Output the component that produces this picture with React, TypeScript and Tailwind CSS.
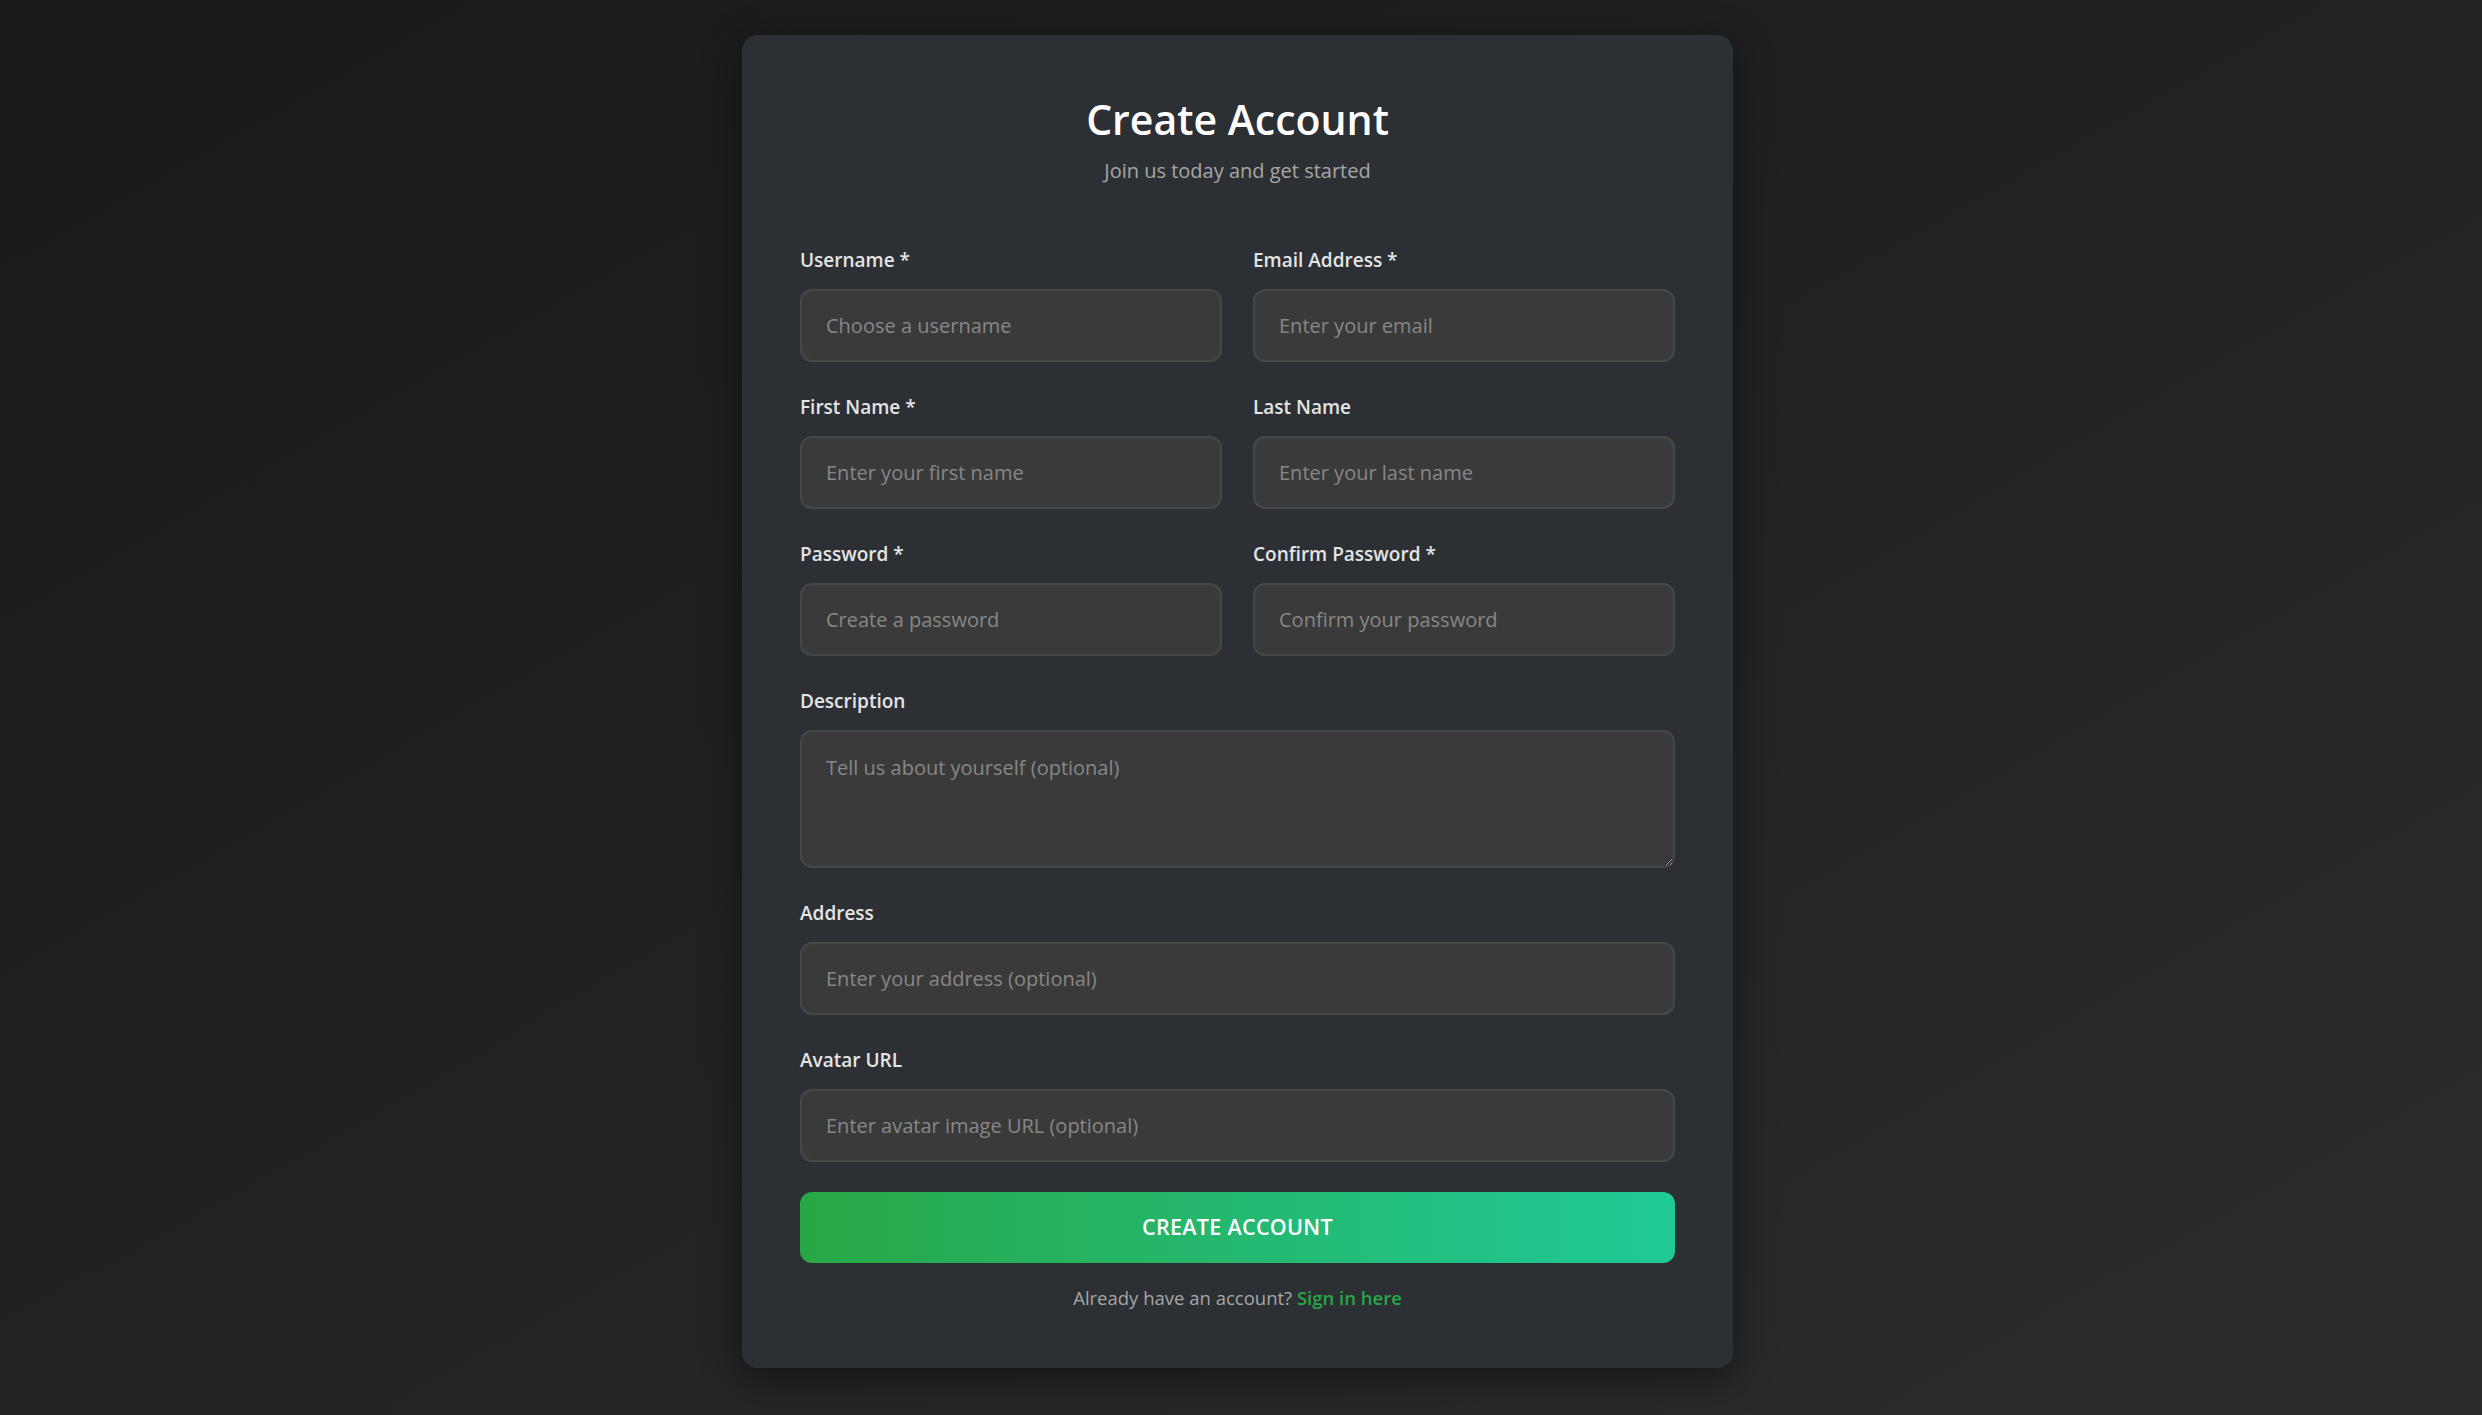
import React from "react";

const inputCls =
  "block w-full h-[73px] rounded-[12px] border-2 border-[#474747] bg-[#3a3a3a] px-[24px] text-[20px] text-[#e0e0e0] placeholder:text-[#878787] outline-none font-['Open_Sans',sans-serif]";

function Field({
  label,
  placeholder,
  type = "text",
}: {
  label: string;
  placeholder: string;
  type?: string;
}) {
  return (
    <div className="mb-[30px]">
      <label className="block mb-[14px] text-[19px] leading-[30px] font-semibold text-[#e4e4e4]">
        {label}
      </label>
      <input type={type} placeholder={placeholder} className={inputCls} />
    </div>
  );
}

export default function App() {
  return (
    <div className="min-h-screen w-full bg-gradient-to-br from-[#1a1a1a] via-[#222222] to-[#2c2c2c] flex justify-center pt-[35px] pr-[7px] pb-[47px] font-['Open_Sans',sans-serif]">
      <div className="w-[991px] rounded-[16px] bg-[#2c3035] shadow-[0_10px_40px_rgba(0,0,0,0.45)] px-[58px] pt-[59px] pb-[51px]">
        <h1 className="text-center text-[41px] leading-[50px] font-semibold text-white">
          Create Account
        </h1>
        <p className="mt-[11px] text-center text-[20px] leading-[31px] text-[#a6a6a6]">
          Join us today and get started
        </p>

        <form className="mt-[59px]" onSubmit={(e) => e.preventDefault()}>
          <div className="grid grid-cols-2 gap-x-[31px]">
            <Field label="Username *" placeholder="Choose a username" />
            <Field label="Email Address *" placeholder="Enter your email" type="email" />
            <Field label="First Name *" placeholder="Enter your first name" />
            <Field label="Last Name" placeholder="Enter your last name" />
            <Field label="Password *" placeholder="Create a password" type="password" />
            <Field label="Confirm Password *" placeholder="Confirm your password" type="password" />
          </div>

          <div className="mb-[30px]">
            <label className="block mb-[14px] text-[19px] leading-[30px] font-semibold text-[#e4e4e4]">
              Description
            </label>
            <textarea
              placeholder="Tell us about yourself (optional)"
              className="block w-full h-[138px] rounded-[12px] border-2 border-[#474747] bg-[#3a3a3a] px-[24px] pt-[21px] pb-[18px] text-[20px] leading-[30px] text-[#e0e0e0] placeholder:text-[#878787] outline-none font-['Open_Sans',sans-serif]"
            />
          </div>

          <Field label="Address" placeholder="Enter your address (optional)" />
          <Field label="Avatar URL" placeholder="Enter avatar image URL (optional)" />

          <button
            type="submit"
            className="block w-full h-[71px] rounded-[12px] bg-gradient-to-r from-[#28a745] to-[#20c997] text-white text-[21.5px] font-semibold uppercase tracking-[0.3px] font-['Open_Sans',sans-serif]"
          >
            Create Account
          </button>

          <p className="mt-[21px] text-center text-[18.5px] leading-[28px] text-[#a6a6a6]">
            Already have an account?{" "}
            <a href="#" className="text-[#28a745] font-semibold no-underline">
              Sign in here
            </a>
          </p>
        </form>
      </div>
    </div>
  );
}
